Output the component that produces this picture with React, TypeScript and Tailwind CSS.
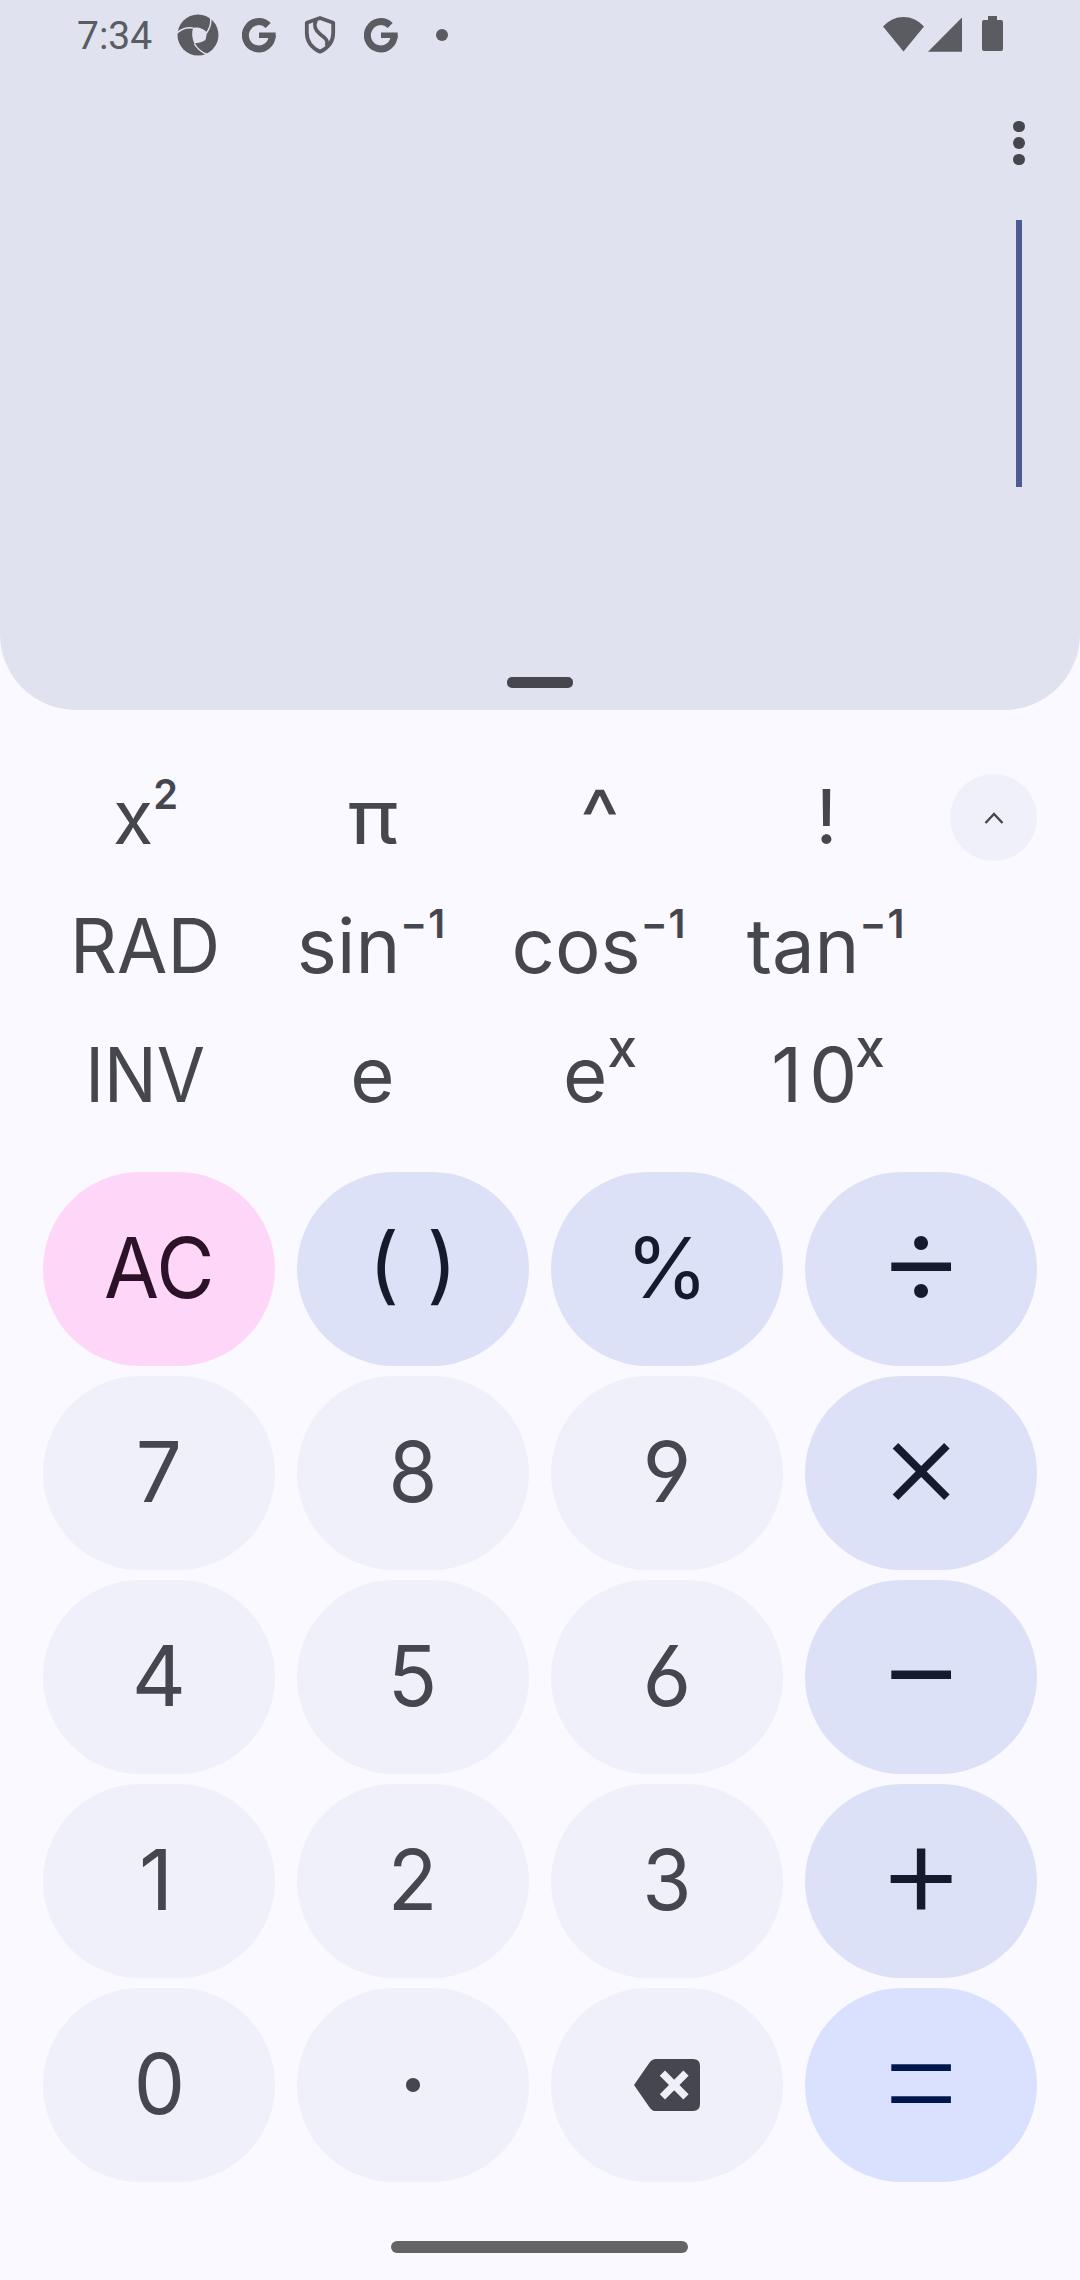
import React from "react";

type Label = { node: React.ReactNode; cls?: string };

const INK = "text-[#46464f]";

function Sup({ children, cls }: { children: React.ReactNode; cls: string }) {
  return <span className={`relative bottom-[35px] leading-none ${cls}`}>{children}</span>;
}

function Inverse() {
  return (
    <Sup cls="text-[40px] font-semibold">
      <span className="mr-px">−</span>1
    </Sup>
  );
}

const sciKeys: Label[] = [
  { node: <>x<Sup cls="text-[41px] font-semibold">2</Sup></>, cls: "scale-x-[0.97]" },
  { node: "π", cls: "scale-x-110" },
  { node: "^", cls: "text-[80px] pt-[2px] scale-x-105" },
  { node: "!" },
  { node: "RAD", cls: "scale-x-[0.96]" },
  { node: <>sin<Inverse /></>, cls: "pr-[3px]" },
  { node: <>cos<Inverse /></>, cls: "pr-[2px]" },
  { node: <>tan<Inverse /></>, cls: "pr-[2px]" },
  { node: "INV", cls: "scale-x-[0.92]" },
  { node: "e" },
  { node: <>e<Sup cls="text-[53px] font-medium tracking-[-1px]">x</Sup></> },
  {
    node: (
      <>
        <span className="tracking-[7px]">1</span>
        <span className="tracking-[-2px]">0</span>
        <Sup cls="text-[53px] font-medium tracking-[-1px]">x</Sup>
      </>
    ),
    cls: "pl-[2px]",
  },
];

const NUM = "bg-[#eff0f9] text-[#46464f]";
const OP = "bg-[#dde1f8] text-[#151b2c]";
const SIGN = "text-[135px] font-light";

type Key = { label: React.ReactNode; tone: string; cls?: string };

const keys: Key[] = [
  { label: "AC", tone: "bg-[#fed7f8] text-[#2b1229]", cls: "scale-x-[0.95]" },
  { label: "( )", tone: OP, cls: "[word-spacing:4px]" },
  { label: "%", tone: OP },
  { label: "÷", tone: OP, cls: SIGN },
  { label: "7", tone: NUM, cls: "scale-x-[0.97]" },
  { label: "8", tone: NUM, cls: "scale-x-[0.94]" },
  { label: "9", tone: NUM },
  { label: "×", tone: OP, cls: "text-[128px] font-light" },
  { label: "4", tone: NUM },
  { label: "5", tone: NUM, cls: "scale-x-[0.97]" },
  { label: "6", tone: NUM },
  { label: "−", tone: OP, cls: SIGN },
  { label: "1", tone: NUM, cls: "pr-[6px]" },
  { label: "2", tone: NUM, cls: "scale-x-[0.97]" },
  { label: "3", tone: NUM, cls: "scale-x-[0.95]" },
  { label: "+", tone: OP, cls: SIGN },
  { label: "0", tone: NUM, cls: "scale-x-[0.97]" },
  { label: "·", tone: NUM, cls: "text-[106px]" },
  { label: <Backspace />, tone: NUM, cls: "pt-[3px]" },
  { label: "=", tone: "bg-[#dae1ff] text-[#00174b]", cls: "text-[160px] font-[220]" },
];

function Backspace() {
  return (
    <svg width="66" height="52" viewBox="0 0 66 52">
      <path
        d="M0 26 15.6 3.6Q18 0 22 0H59Q66 0 66 7V45Q66 52 59 52H22Q18 52 15.6 48.4Z"
        fill="currentColor"
      />
      <path d="M28.4 14.2 52 37.8M52 14.2 28.4 37.8" stroke="#eff0f9" strokeWidth="7.4" />
    </svg>
  );
}

function Aperture() {
  return (
    <svg width="42" height="42" viewBox="-21 -21 42 42">
      <circle r="20.5" fill="#5b5b62" />
      <path d="M-5-7C0-8.3 5-6.5 9-2.5C8.500 0 8 3 7.500 5C4 7.500 0 8-3.700 8.500C-6 3-6.500-2-5-7Z" fill="#e0e2ef" />
      <path
        d="M-21-2C-16-6.500-10-8-5-7M12.500-17.500C13.500-12 12-7 8.500-2M-3.700 8.500C-1 13.500 3 17 9 19.500"
        fill="none"
        stroke="#e0e2ef"
        strokeWidth="1.5"
      />
    </svg>
  );
}

function GLogo() {
  return (
    <svg width="34" height="35" viewBox="-17 -17.5 34 35">
      <path d="M9.200-10A13.400 13.700 0 1 0 13.200 0" fill="none" stroke="#5b5b62" strokeWidth="7" />
      <path d="M0-3H16.600L16.700 2.500H0Z" fill="#5b5b62" />
    </svg>
  );
}

function Shield() {
  return (
    <svg width="32" height="38" viewBox="0 0 32 38" fill="none" stroke="#5b5b62" strokeWidth="3.8">
      <path d="M16 2 29.200 6.800V17C29.200 26 24 32 16 35.700C8 32 2.800 26 2.800 17V6.800Z" strokeLinejoin="round" />
      <path d="M12 4C9 11 12 15 16.500 18.500C22 22.500 24.500 25 22.500 30" />
    </svg>
  );
}

export default function App() {
  return (
    <div className="flex h-[2280px] w-[1080px] flex-col overflow-hidden bg-[#f9f9ff] font-['Inter',sans-serif]">
      <header className="flex h-[710px] flex-col rounded-b-[76px] bg-[#e0e2ef]">
        <div className="flex h-[70px] items-center pl-[77px] pr-[77px]">
          <span className="w-[100px] pt-[2px] font-['Roboto',sans-serif] text-[39px] leading-[44px] text-[#5b5b62]">
            7:34
          </span>
          <Aperture />
          <span className="w-[23px]" />
          <GLogo />
          <span className="w-[28px]" />
          <Shield />
          <span className="w-[28px]" />
          <GLogo />
          <span className="ml-[38px] size-[12px] rounded-full bg-[#5b5b62]" />
          <svg className="ml-auto" width="120" height="38" viewBox="0 0 120 38" fill="#5b5b62">
            <path d="M0 10.500Q8.500 1 20.500 1T41 10.500L20.500 35.500Z" />
            <path d="M45 35.700 79 1.500V35.700Z" />
            <path d="M105 0H114V4H118Q120 4 120 6V33Q120 35 118 35H101Q99 35 99 33V6Q99 4 101 4H105Z" />
          </svg>
        </div>
        <div className="flex flex-col items-center gap-[5px] self-end pr-[55.5px] pt-[50.5px]">
          <span className="size-[11.5px] rounded-full bg-[#46464f]" />
          <span className="size-[11.5px] rounded-full bg-[#46464f]" />
          <span className="size-[11.5px] rounded-full bg-[#46464f]" />
        </div>
        <div className="mr-[58px] mt-[55px] h-[267px] w-[6px] self-end bg-[#4a5c92]" />
        <div className="mb-[22px] mt-auto h-[11px] w-[66px] self-center rounded-[5px] bg-[#46464f]" />
      </header>

      <section className="flex h-[462px] items-start pl-[32px] pt-[43px]">
        <div className={`grid grid-cols-[repeat(4,227px)] auto-rows-[129px] text-[76px] leading-none ${INK}`}>
          {sciKeys.map((k, i) => (
            <button key={i} className="flex items-center justify-center pb-[3px]">
              <span className={`block whitespace-nowrap ${k.cls ?? ""}`}>{k.node}</span>
            </button>
          ))}
        </div>
        <button className="ml-[10px] mt-[21px] flex size-[87px] items-center justify-center rounded-full bg-[#eff0f9]">
          <svg width="20" height="12" viewBox="0 0 20 12" fill="none" stroke="#46464f" strokeWidth="2.4">
            <path d="M1.500 11 10 2 18.500 11" />
          </svg>
        </button>
      </section>

      <main className="grid grid-cols-[repeat(4,232px)] auto-rows-[194px] gap-x-[22px] gap-y-[10px] pl-[43px] text-[84px] leading-none [font-feature-settings:'cv03','cv04','case']">
        {keys.map((k, i) => (
          <button key={i} className={`flex items-center justify-center rounded-full pb-[3px] ${k.tone}`}>
            <span className={`block whitespace-nowrap ${k.cls ?? ""}`}>{k.label}</span>
          </button>
        ))}
      </main>

      <div className="ml-[391px] mt-[59px] h-[11.5px] w-[297px] rounded-full bg-[#646466]" />
    </div>
  );
}
